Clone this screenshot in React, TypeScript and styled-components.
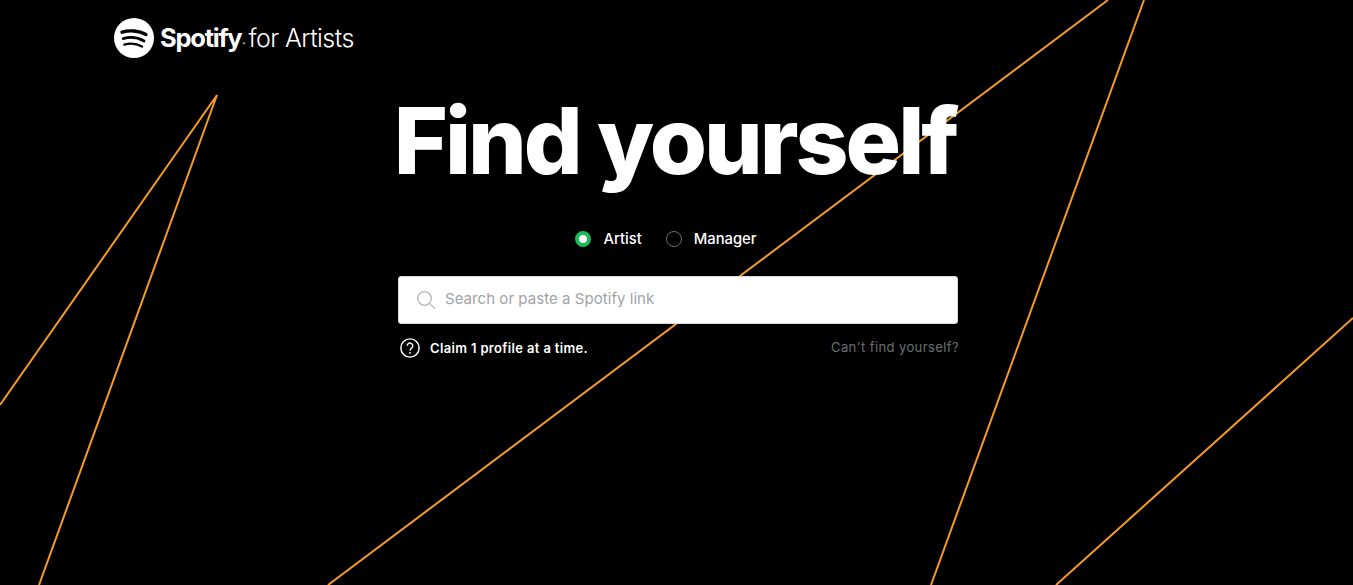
import React from "react";
import styled, { createGlobalStyle } from "styled-components";

const Global = createGlobalStyle`
  html, body { margin: 0; padding: 0; background: #000; }
  body { font-family: "Inter", "Liberation Sans", sans-serif; overflow: hidden; }
`;
const Page = styled.div`
  position: relative; width: 1353px; height: 585px; background: #000; overflow: hidden;
`;
const Lines = styled.svg`
  position: absolute; inset: 0; width: 1353px; height: 585px;
`;
const Header = styled.header`
  position: relative; display: flex; align-items: center; height: 40px; padding: 18px 0 0 114px;
`;
const Brand = styled.div`
  display: flex; align-items: center; color: #fff;
`;
const BrandName = styled.span`
  margin-left: 6px; font: 700 25.5px/40px "Inter", sans-serif; letter-spacing: -1.25px;
`;
const Reg = styled.span`
  font-size: 4px; letter-spacing: 0; margin: 10px 0 0 1px; align-self: center; width: 3px;
`;
const BrandSub = styled.span`
  margin-left: 3px; font: 300 25px/40px "Inter", sans-serif; letter-spacing: -0.55px;
`;
const Main = styled.main`
  position: relative; width: 560px; margin: 0 0 0 398px; display: flex; flex-direction: column;
`;
const Title = styled.h1`
  margin: 27px -7px 0 -13px; height: 110px; color: #fff; text-align: center; white-space: nowrap;
  font: 800 92.5px/110px "Inter", sans-serif; letter-spacing: -3px;
`;
const RoleRow = styled.div`
  display: flex; justify-content: center; align-items: center; gap: 24px; margin-top: 34px; height: 20px;
  padding-right: 24px;
`;
const Role = styled.label`
  display: flex; align-items: center; gap: 12px; color: #fff; font: 500 14.8px/20px "Inter", sans-serif;
`;
const Radio = styled.span<{ $on?: boolean }>`
  box-sizing: border-box; width: 16px; height: 16px; border-radius: 50%;
  background: ${p => (p.$on ? "#fff" : "transparent")};
  border: ${p => (p.$on ? "4px solid #1db954" : "1px solid #6e6e6e")};
`;
const SearchBox = styled.div`
  box-sizing: border-box; height: 48px; margin-top: 27px; display: flex; align-items: center; gap: 9px;
  padding-left: 18px; background: #fff; border-radius: 3px; border: 1px solid #d9dadc;
`;
const Placeholder = styled.span`
  color: #a0a3a6; font: 400 15px/20px "Inter", sans-serif; margin-top: -2px; letter-spacing: 0.05px;
`;
const Foot = styled.div`
  display: flex; align-items: center; justify-content: space-between; margin-top: 13px; height: 22px;
`;
const Hint = styled.div`
  display: flex; align-items: center; gap: 10px; padding-left: 2px; color: #fff;
  font: 600 13px/20px "Inter", sans-serif; letter-spacing: 0.35px;
`;
const FindLink = styled.a`
  color: #6a7076; font: 400 13px/20px "Inter", sans-serif; margin: -3px -1px 0 0; letter-spacing: 0.4px;
`;

export default function App() {
  return (
    <Page>
      <Global />
      <Lines viewBox="0 0 1353 585" fill="none" stroke="#f59b23" strokeWidth="2">
        <path d="M0 405L217 95L39 585" />
        <path d="M1108 0L328 585" />
        <path d="M1144 0L931 585" />
        <path d="M1353 318L1056 585" />
      </Lines>
      <Header>
        <Brand>
          <svg width="40" height="40" viewBox="0 0 40 40">
            <circle cx="20" cy="20" r="20" fill="#fff" />
            <g fill="none" stroke="#000" strokeLinecap="round">
              <path d="M8 14.2C15 12 25 12.4 32 16.4" strokeWidth="3.4" />
              <path d="M9.2 20.6C15.5 18.8 23.8 19.4 30 23" strokeWidth="2.8" />
              <path d="M10.4 26.6C15.8 25.2 22.8 25.6 28 28.6" strokeWidth="2.3" />
            </g>
          </svg>
          <BrandName>Spotify</BrandName>
          <Reg>®</Reg>
          <BrandSub>for Artists</BrandSub>
        </Brand>
      </Header>
      <Main>
        <Title>Find yourself</Title>
        <RoleRow>
          <Role><Radio $on />Artist</Role>
          <Role><Radio />Manager</Role>
        </RoleRow>
        <SearchBox>
          <svg width="19" height="18" viewBox="0 0 19 18" fill="none" stroke="#b3b5b8" strokeWidth="1.3">
            <circle cx="7.5" cy="7.5" r="6.8" />
            <path d="M12.6 12.6L17.6 17.4" strokeLinecap="round" />
          </svg>
          <Placeholder>Search or paste a Spotify link</Placeholder>
        </SearchBox>
        <Foot>
          <Hint>
            <svg width="20" height="20" viewBox="0 0 21 21" fill="none" stroke="#fff">
              <circle cx="10.5" cy="10.5" r="9.6" strokeWidth="1.5" />
              <path d="M7.6 8.2a2.9 2.9 0 1 1 4.6 2.4c-1 .7-1.7 1.2-1.7 2.6" strokeWidth="1.5" />
              <circle cx="10.5" cy="15.7" r="0.95" fill="#fff" stroke="none" />
            </svg>
            Claim 1 profile at a time.
          </Hint>
          <FindLink>Can't find yourself?</FindLink>
        </Foot>
      </Main>
    </Page>
  );
}
